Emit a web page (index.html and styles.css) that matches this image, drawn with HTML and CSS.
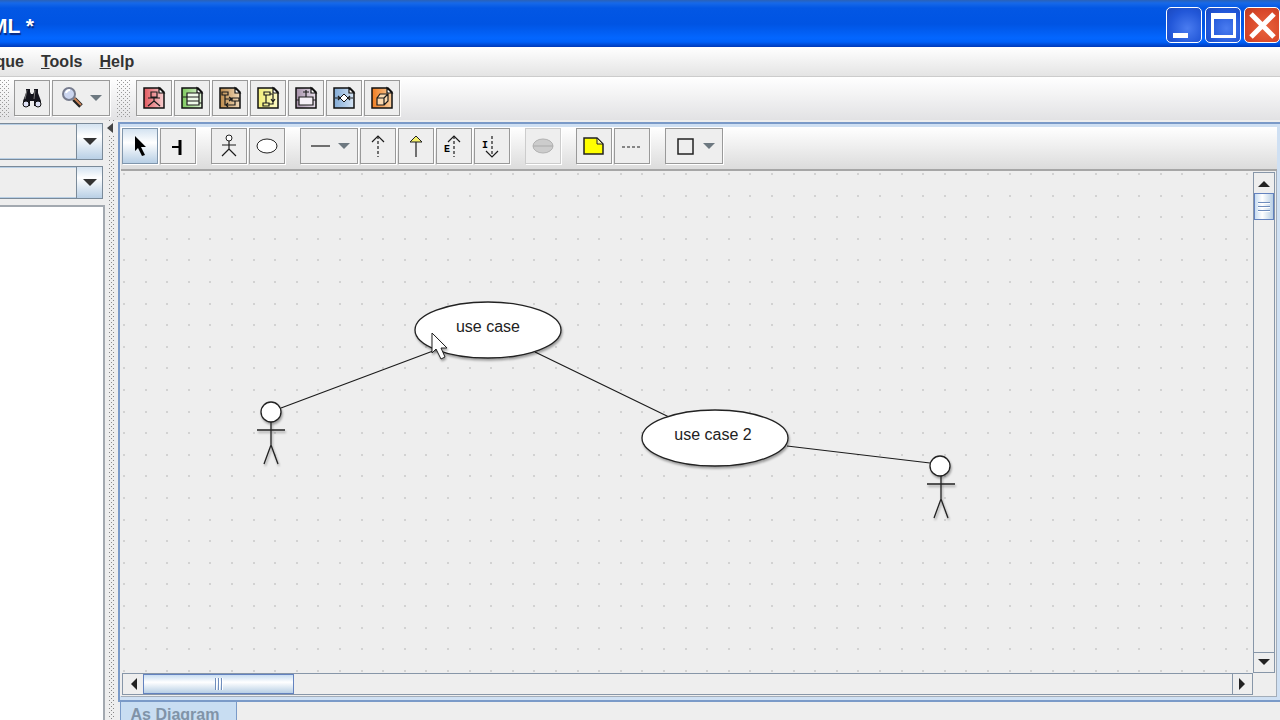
FILE: index.html
```html
<!DOCTYPE html>
<html lang="en">
<head>
<meta charset="utf-8">
<title>UML editor</title>
<link rel="stylesheet" href="styles.css">
</head>
<body>
<svg class="defs" aria-hidden="true">
  <defs>
    <linearGradient id="gRed"><stop offset="0" stop-color="#e2595f"/><stop offset="1" stop-color="#f7cfd0"/></linearGradient>
    <linearGradient id="gGreen"><stop offset="0" stop-color="#7cc95c"/><stop offset="1" stop-color="#e0f4d6"/></linearGradient>
    <linearGradient id="gBrown"><stop offset="0" stop-color="#bd8b4c"/><stop offset="1" stop-color="#f0d9b9"/></linearGradient>
    <linearGradient id="gYellow"><stop offset="0" stop-color="#f2ee79"/><stop offset="1" stop-color="#fbf8c4"/></linearGradient>
    <linearGradient id="gPurple"><stop offset="0" stop-color="#a590a9"/><stop offset="1" stop-color="#e9dfeb"/></linearGradient>
    <linearGradient id="gBlue"><stop offset="0" stop-color="#82abd7"/><stop offset="1" stop-color="#d5e4f4"/></linearGradient>
    <linearGradient id="gOrange"><stop offset="0" stop-color="#f07c20"/><stop offset="1" stop-color="#f9cf9f"/></linearGradient>
    <symbol id="page" viewBox="0 0 24 24"><path d="M2 2H18L22 6V22H2Z" stroke="#111" stroke-width="1.5"/><path d="M17 2V7H22Z" fill="#fff" stroke="#111" stroke-width="1.2"/></symbol>
    <symbol id="down" viewBox="0 0 14 8"><path d="M0 0H14L7 7Z"/></symbol>
  </defs>
</svg>

<header class="titlebar">
  <h1 class="title">ML *</h1>
  <div class="window-buttons">
    <button class="win" aria-label="Minimize"><svg width="34" height="34"><path d="M6 25H21V30H6Z" fill="#fff"/></svg></button>
    <button class="win" aria-label="Maximize"><svg width="34" height="34"><path d="M5 5H30V30H5ZM8 11V27H27V11Z" fill="#fff" fill-rule="evenodd"/></svg></button>
    <button class="win win-close" aria-label="Close"><svg width="34" height="34"><path d="M6 6L29 29M29 6L6 29" stroke="#fff" stroke-width="5"/></svg></button>
  </div>
</header>

<nav class="menubar">
  <button class="menu menu-cut">que</button>
  <button class="menu"><u>T</u>ools</button>
  <button class="menu"><u>H</u>elp</button>
</nav>

<div class="main-tools">
  <span class="grip grip-first"></span>
  <div class="group">
    <button class="tool" aria-label="Find"><svg width="24" height="24"><path d="M6 3H10V6L11 8H13L14 6V3H18V7L21 15V20H14V15H10V20H3V15L6 7Z" fill="#15151d"/><path d="M7 4L5 13M15 4L14 13" stroke="#777" stroke-width="1"/><circle cx="6" cy="18" r="3" fill="#dfe2f7" stroke="#111"/><circle cx="18" cy="18" r="3" fill="#dfe2f7" stroke="#111"/></svg></button>
    <button class="tool tool-wide" aria-label="Zoom"><svg width="24" height="24"><path d="M13 13L20 20" stroke="#222" stroke-width="5"/><path d="M13 12L20 19" stroke="#c98257" stroke-width="2"/><circle cx="8" cy="8" r="6" fill="#cbd5ef" stroke="#777c8e" stroke-width="2"/><path d="M5 7Q6 4 9 4" stroke="#fff" fill="none" stroke-width="2"/></svg><svg class="arrow" width="12" height="7"><use href="#down"/></svg></button>
  </div>
  <span class="grip"></span>
  <div class="group">
    <button class="tool" aria-label="New use case diagram"><svg width="24" height="24"><use href="#page" fill="url(#gRed)"/><path d="M9 6H15V11H9ZM12 11V15M6 12H18M12 15L6 20M12 15L18 20" class="ink"/></svg></button>
    <button class="tool" aria-label="New class diagram"><svg width="24" height="24"><use href="#page" fill="url(#gGreen)"/><path d="M7 7H19V19H7Z" fill="#eef9e8"/><path d="M7 7H19V19H7ZM7 11H19M7 15H19M3 11H7M19 17H22" class="ink"/></svg></button>
    <button class="tool" aria-label="New sequence diagram"><svg width="24" height="24"><use href="#page" fill="url(#gBrown)"/><path d="M4 6H10V9H4ZM14 12H21V15H14ZM7 9V19H17V15M7 13H14M11 11L14 13L11 15M10 17L8 19L10 21" class="ink"/></svg></button>
    <button class="tool" aria-label="New collaboration diagram"><svg width="24" height="24"><use href="#page" fill="url(#gYellow)"/><path d="M8 6H14V9H8ZM7 17H13V20H7ZM10 9V17M14 8H17V16M13 18H17V15M15 13L17 16L19 13" class="ink"/></svg></button>
    <button class="tool" aria-label="New statechart diagram"><svg width="24" height="24"><use href="#page" fill="url(#gPurple)"/><path d="M5 11H19V19H5Z" fill="#f6f0f7"/><path d="M5 11H19V19H5ZM12 4V11M9 6H15M2 14H5M19 14H22" class="ink"/></svg></button>
    <button class="tool" aria-label="New activity diagram"><svg width="24" height="24"><use href="#page" fill="url(#gBlue)"/><path d="M3 12H8M16 12H21M6 10L8 12L6 14M18 10L16 12L18 14" class="ink"/><path d="M12 8L16 12L12 16L8 12Z" fill="#fff" stroke="#111"/></svg></button>
    <button class="tool" aria-label="New deployment diagram"><svg width="24" height="24"><use href="#page" fill="url(#gOrange)"/><path d="M7 12L10 8H18V15L14 19H7Z" fill="#fbd9b0"/><path d="M7 12H14V19H7ZM7 12L10 8H18L14 12M18 8V15L14 19" class="ink"/></svg></button>
  </div>
</div>

<main class="body">
  <aside class="explorer">
    <div class="combo combo-tall"><select aria-label="Perspective"><option></option></select><span class="combo-arrow"><svg width="14" height="8"><use href="#down"/></svg></span></div>
    <div class="combo"><select aria-label="Order"><option></option></select><span class="combo-arrow"><svg width="14" height="8"><use href="#down"/></svg></span></div>
    <div class="tree"></div>
  </aside>
  <div class="divider"><svg width="6" height="10"><path d="M6 0V10L0 5Z" fill="#444"/></svg></div>

  <section class="editor">
    <div class="frame">
      <div class="diagram-tools">
        <div class="group">
          <button class="tool selected" aria-label="Select"><svg width="24" height="24"><path d="M7 2V17L10 14L14 22L17 21L13 13H18Z" fill="#000"/></svg></button>
          <button class="tool" aria-label="Broom"><svg width="24" height="24"><path d="M14 6V21" stroke="#000" stroke-width="3"/><path d="M6 13H14" stroke="#000" stroke-width="2"/></svg></button>
        </div>
        <div class="group">
          <button class="tool" aria-label="Actor"><svg width="24" height="24"><circle cx="12" cy="4" r="3" fill="#fff" stroke="#222"/><path d="M12 7V15M5 11H19M12 15L5 22M12 15L19 22" class="ink"/></svg></button>
          <button class="tool" aria-label="Use case"><svg width="24" height="24"><ellipse cx="12" cy="12" rx="10" ry="7" fill="#fff" stroke="#222"/></svg></button>
        </div>
        <div class="group">
          <button class="tool tool-wide" aria-label="Association"><svg width="24" height="24"><path d="M2 12H21" class="ink"/></svg><svg class="arrow" width="12" height="7"><use href="#down"/></svg></button>
          <button class="tool" aria-label="Dependency"><svg width="24" height="24"><path d="M12 2V23" class="ink dash"/><path d="M6 8L12 2L18 8" class="ink"/></svg></button>
          <button class="tool" aria-label="Generalization"><svg width="24" height="24"><path d="M12 8V23" class="ink"/><path d="M12 2L18 8H6Z" fill="#f5f16b" stroke="#222"/></svg></button>
          <button class="tool" aria-label="Extend"><svg width="24" height="24"><path d="M12 2V23" class="ink dash"/><path d="M6 8L12 2L18 8" class="ink"/><text x="2" y="18" class="letter">E</text></svg></button>
          <button class="tool" aria-label="Include"><svg width="24" height="24"><path d="M12 2V23" class="ink dash"/><path d="M6 17L12 23L18 17" class="ink"/><text x="2" y="14" class="letter">I</text></svg></button>
        </div>
        <div class="group">
          <button class="tool" disabled aria-label="Extension point"><svg width="24" height="24"><ellipse cx="12" cy="12" rx="10" ry="7" fill="#ccc" stroke="#b2b2b2"/><path d="M2 12H22" stroke="#aaa"/></svg></button>
        </div>
        <div class="group">
          <button class="tool" aria-label="Comment"><svg width="24" height="24"><path d="M2 4H15L21 10V20H2Z" fill="#ff0" stroke="#222" stroke-width="1.5"/><path d="M15 4V10H21Z" fill="#f5f2a0" stroke="#222"/></svg></button>
          <button class="tool" aria-label="Comment link"><svg width="24" height="24"><path d="M2 13H22" class="ink dash"/></svg></button>
        </div>
        <div class="group">
          <button class="tool tool-wide" aria-label="Rectangle"><svg width="24" height="24"><rect x="4" y="5" width="15" height="15" fill="none" stroke="#222" stroke-width="1.5"/></svg><svg class="arrow" width="12" height="7"><use href="#down"/></svg></button>
        </div>
      </div>

      <div class="viewport">
        <div class="canvas">
          <svg class="drawing" role="img" aria-label="Use case diagram">
            <defs>
              <pattern id="dots" x="123" y="173" width="108" height="108" patternUnits="userSpaceOnUse">
                <path fill="#d2d2d2" d="M0 0h2v2h-2zM22 0h2v2h-2zM43 0h2v2h-2zM65 0h2v2h-2zM86 0h2v2h-2zM0 22h2v2h-2zM22 22h2v2h-2zM43 22h2v2h-2zM65 22h2v2h-2zM86 22h2v2h-2zM0 43h2v2h-2zM22 43h2v2h-2zM43 43h2v2h-2zM65 43h2v2h-2zM86 43h2v2h-2zM0 65h2v2h-2zM22 65h2v2h-2zM43 65h2v2h-2zM65 65h2v2h-2zM86 65h2v2h-2zM0 86h2v2h-2zM22 86h2v2h-2zM43 86h2v2h-2zM65 86h2v2h-2zM86 86h2v2h-2z"/>
              </pattern>
              <filter id="shade" x="-20%" y="-20%" width="150%" height="150%"><feDropShadow dx="1" dy="2" stdDeviation="1" flood-opacity=".35"/></filter>
            </defs>
            <g transform="translate(-121 -171)">
              <rect x="121" y="171" width="100%" height="100%" fill="url(#dots)"/>
              <path d="M281 408L433 351M535 352L669 417M787 446L930 463" class="ink"/>
              <g filter="url(#shade)" class="node"><ellipse cx="488" cy="330" rx="73" ry="28"/></g>
              <g filter="url(#shade)" class="node"><ellipse cx="715" cy="438" rx="73" ry="28"/></g>
              <g filter="url(#shade)" class="node"><circle cx="271" cy="412" r="10"/><path d="M271 422V445M257 430H285M271 445L264 464M271 445L278 464"/></g>
              <g filter="url(#shade)" class="node"><circle cx="940" cy="466" r="10"/><path d="M941 476V499M927 484H955M941 499L934 518M941 499L948 518"/></g>
              <text x="488" y="332" class="label">use case</text>
              <text x="713" y="440" class="label">use case 2</text>
              <path d="M432 333V353L436 349L441 359L445 357L441 348H447Z" fill="#fff" stroke="#222" filter="url(#shade)"/>
            </g>
          </svg>
        </div>
        <div class="vbar">
          <button class="step" aria-label="Scroll up"><svg width="12" height="7"><path d="M0 7L6 1L12 7Z"/></svg></button>
          <div class="vthumb"></div>
          <button class="step step-end" aria-label="Scroll down"><svg width="12" height="7"><path d="M0 0H12L6 6Z"/></svg></button>
        </div>
        <div class="hbar">
          <button class="step" aria-label="Scroll left"><svg width="7" height="12"><path d="M7 0V12L1 6Z"/></svg></button>
          <div class="hthumb"></div>
          <button class="step step-end" aria-label="Scroll right"><svg width="7" height="12"><path d="M0 0V12L6 6Z"/></svg></button>
        </div>
      </div>
    </div>
    <div class="tabs"><button class="tab">As Diagram</button><span class="tab-line"></span></div>
  </section>
</main>
</body>
</html>
```
FILE: styles.css
```css
* { box-sizing: border-box; }
body {
  margin: 0;
  height: 100vh;
  display: flex;
  flex-direction: column;
  overflow: hidden;
  background: #eee;
  font: 16px "Liberation Sans", Arial, sans-serif;
  color: #333;
}
button { padding: 0; border: 0; background: none; font: inherit; color: inherit; }
svg { display: block; flex: none; }
.defs { position: absolute; width: 0; height: 0; }
.ink { fill: none; stroke: #1c1c1c; stroke-width: 1.2; }
.dash { stroke-dasharray: 3 2; }
.letter { font: bold 10px "Liberation Mono", monospace; fill: #000; }

.titlebar {
  flex: none;
  height: 47px;
  display: flex;
  justify-content: space-between;
  background: linear-gradient(#2b62b8 0, #1769e8 3px, #0357e4 8px, #0054e3 24px, #0366ff 38px, #0060f8 42px, #0039b8 47px);
}
.title {
  width: 34px;
  margin: 0;
  padding-top: 4px;
  display: flex;
  justify-content: flex-end;
  white-space: nowrap;
  font: bold 21px/44px "Liberation Sans", Arial, sans-serif;
  color: #fff;
  text-shadow: 1px 2px 1px #0a2a80;
}
.window-buttons { display: flex; gap: 3px; padding-top: 7px; }
.win {
  width: 36px;
  height: 36px;
  border: 1px solid #fff;
  border-radius: 5px;
  background: radial-gradient(circle at 60% 60%, #4a7cf0, #2257d8 60%, #1a48bd);
}
.win-close { background: radial-gradient(circle at 60% 60%, #e8623c, #d9482a 60%, #b93a20); }

.menubar {
  flex: none;
  height: 30px;
  display: flex;
  background: linear-gradient(#fff, #e4e4e4);
  border-bottom: 1px solid #ccc;
}
.menu { margin-right: 17px; font-weight: bold; }
.menu-cut { width: 24px; display: flex; align-items: center; justify-content: flex-end; }

.main-tools {
  flex: none;
  height: 43px;
  display: flex;
  padding-top: 3px;
  background: linear-gradient(#fff, #e2e2e4);
}
.grip {
  width: 14px;
  height: 38px;
  margin: 0 5px 0 7px;
  background:
    conic-gradient(from 270deg at 1px 1px, #999 90deg, transparent 0) 0 0 / 4px 4px,
    conic-gradient(from 270deg at 1px 1px, #999 90deg, transparent 0) 2px 2px / 4px 4px;
}
.grip-first { width: 9px; margin: 0 5px 0 0; }
.group { display: flex; gap: 2px; }
.tool {
  width: 36px;
  height: 36px;
  display: flex;
  align-items: center;
  justify-content: center;
  border: 1px solid #999;
  background: #eee;
  box-shadow: 1px 1px 0 #fff;
}
.tool-wide { width: 58px; gap: 5px; }
.tool:disabled { border-color: #ccc; }
.selected { border-color: #8096ac; background: linear-gradient(#d4e3f1, #fff 40%, #b8cfe5); }
.arrow { fill: #6d7880; }

.body { flex: 1; min-height: 0; display: flex; }
.explorer { width: 105px; flex: none; display: flex; flex-direction: column; gap: 6px; padding-top: 3px; }
.combo { position: relative; height: 33px; flex: none; }
.combo-tall { height: 37px; }
.combo select {
  width: 103px;
  height: 100%;
  border: 1px solid #7a8a99;
  border-left: 0;
  box-shadow: inset 0 1px #b8cfe5, inset 0 -1px #b8cfe5;
  appearance: none;
  background: #eee;
}
.combo-arrow {
  position: absolute;
  inset: 1px 3px 1px auto;
  width: 26px;
  display: flex;
  align-items: center;
  justify-content: center;
  border-left: 1px solid #7a8a99;
  background: linear-gradient(#d4e3f1, #fff 35%, #b8cfe5);
  fill: #333;
  pointer-events: none;
}
.tree { flex: 1; border-top: 2px solid #a3a9b0; border-right: 2px solid #a3a9b0; background: #fff; }
.divider {
  flex: none;
  width: 13px;
  padding: 3px 0 0 2px;
  background:
    linear-gradient(90deg, #eee 4px, transparent 4px 10px, #eee 10px),
    conic-gradient(from 270deg at 1px 1px, #888 90deg, transparent 0) 0 0 / 4px 4px,
    conic-gradient(from 270deg at 1px 1px, #888 90deg, transparent 0) 2px 2px / 4px 4px,
    #eee;
}
.divider svg { box-shadow: 0 0 0 2px #eee; background: #eee; }

.editor { flex: 1; min-width: 0; padding-top: 2px; display: flex; flex-direction: column; }
.frame {
  flex: 1;
  min-height: 0;
  display: flex;
  flex-direction: column;
  border: solid #7a9ac8;
  border-width: 2px 0 2px 2px;
  box-shadow: inset -3px 3px #cfe0f3, inset 0 -4px #cfe0f3;
  padding: 3px 3px 3px 1px;
}
.diagram-tools {
  flex: none;
  height: 44px;
  display: flex;
  gap: 15px;
  padding: 1px;
  background: linear-gradient(#fff, #dcdcdc);
  border-bottom: 2px solid #a6a6a6;
}
.viewport {
  flex: 1;
  min-height: 0;
  display: grid;
  grid-template: minmax(0, 1fr) 22px / minmax(0, 1fr) 22px;
  background: #eee;
  border: solid #a3adb9;
  border-width: 0 1px 1px 0;
  padding-right: 1px;
  padding-bottom: 1px;
}
.canvas { min-width: 0; min-height: 0; overflow: hidden; }
.drawing { width: 100%; height: 100%; }
.node { fill: #fff; stroke: #222; stroke-width: 1.3; }
.label { font: 16px "Liberation Sans", Arial, sans-serif; fill: #222; text-anchor: middle; }
.vbar, .hbar { display: flex; border: 1px solid #8796a8; background: #eee; }
.vbar { flex-direction: column; margin-top: 1px; }
.hbar { margin-left: 1px; }
.step { width: 20px; height: 20px; flex: none; display: flex; align-items: center; justify-content: center; fill: #222; }
.vbar .step-end { margin-top: auto; border-top: 1px solid #8796a8; }
.hbar .step-end { margin-left: auto; border-left: 1px solid #8796a8; }
.vthumb {
  height: 27px;
  border: solid #6382bf;
  border-width: 1px;
  background: repeating-linear-gradient(#6f8dbd 0 1px, #fff 1px 2px, transparent 2px 4px) center / 12px 10px no-repeat, linear-gradient(90deg, #c8ddf2, #fff 40%, #b8cfe5);
}
.hthumb {
  width: 151px;
  border: solid #6382bf;
  border-width: 1px;
  background: repeating-linear-gradient(90deg, #6f8dbd 0 1px, #fff 1px 2px, transparent 2px 3px) center / 8px 12px no-repeat, linear-gradient(#c8ddf2, #fff 40%, #b8cfe5);
}
.tabs { flex: none; height: 18px; margin-left: 2px; display: flex; overflow: hidden; }
.tab {
  height: 26px;
  width: 117px;
  padding-right: 7px;
  border: solid #7a9ac8;
  border-width: 0 1px;
  background: #c8ddf2;
  font-weight: bold;
  color: #8093a8;
}
.tab-line { flex: 1; background: #eee; }
```
